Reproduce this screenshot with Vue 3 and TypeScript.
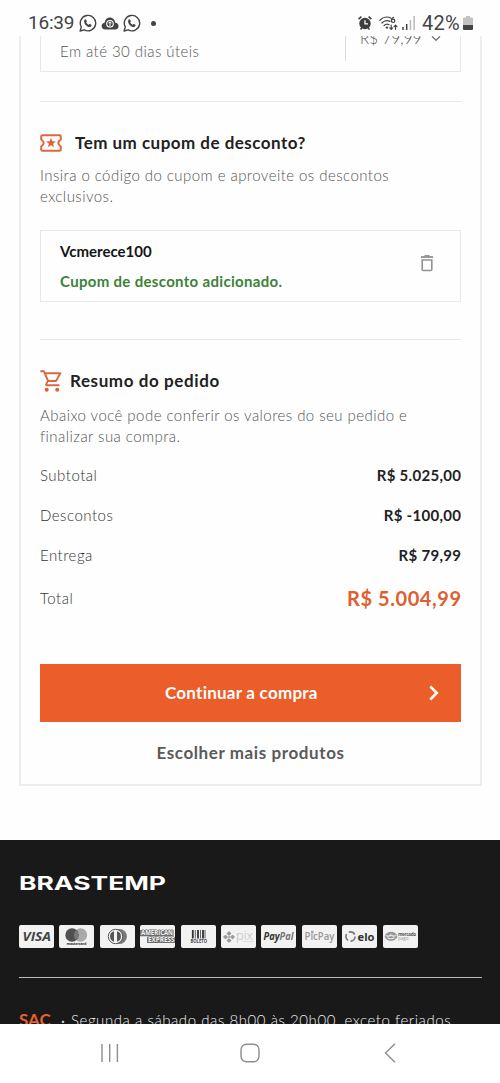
<script setup lang="ts">
interface SummaryRow {
  label: string
  value: string
  total?: boolean
}

const rows: SummaryRow[] = [
  { label: 'Subtotal', value: 'R$ 5.025,00' },
  { label: 'Descontos', value: 'R$ -100,00' },
  { label: 'Entrega', value: 'R$ 79,99' },
  { label: 'Total', value: 'R$ 5.004,99', total: true },
]

const brands: string[] = [
  'visa', 'mastercard', 'diners', 'amex', 'boleto', 'pix', 'paypal', 'picpay', 'elo', 'mercadopago',
]
</script>

<template>
  <div class="screen">
    <header class="status">
      <div class="status-left">
        <span class="clock">16:39</span>
        <svg class="whats" viewBox="0 0 18 18"><path d="M1.1 17 2.3 12.9A7.7 7.7 0 1 1 5.2 15.8Z" fill="none" stroke="#444" stroke-width="1.4" stroke-linejoin="round" /><path d="M5.2 6.4c.5-1.6 1.7-1.4 2-.6l.6 1.4c.2.5-.5 1-.6 1.3.5 1.1 1.3 1.8 2.4 2.3.4-.1.8-.9 1.2-.8l1.6.8c.6.4 0 1.8-1.2 2.1C8.500 13.500 4.500 9.600 5.200 6.400Z" fill="#444" /></svg>
        <svg class="cloud" viewBox="0 0 18 13"><path d="M4.200 12.500C-.3 12.500-.6 6.200 3.500 5.700 4.500-.9 13-1.300 14.300 5.700 18.700 6 18.700 12.500 14 12.500Z" fill="#444" /><circle cx="9" cy="6.800" r="3.300" fill="none" stroke="#fff" stroke-width="1.100" /><path d="M9 9V5M7.500 6.300 9 4.800l1.500 1.500" fill="none" stroke="#fff" /></svg>
        <svg class="whats" viewBox="0 0 18 18"><path d="M1.1 17 2.3 12.9A7.7 7.7 0 1 1 5.2 15.8Z" fill="none" stroke="#444" stroke-width="1.4" stroke-linejoin="round" /><path d="M5.2 6.4c.5-1.6 1.7-1.4 2-.6l.6 1.4c.2.5-.5 1-.6 1.3.5 1.1 1.3 1.8 2.4 2.3.4-.1.8-.9 1.2-.8l1.6.8c.6.4 0 1.8-1.2 2.1C8.500 13.500 4.500 9.600 5.200 6.400Z" fill="#444" /></svg>
        <i class="dot"></i>
      </div>
      <div class="status-right">
        <svg class="alarm" viewBox="0 0 14 14"><circle cx="7" cy="7.500" r="5.700" fill="#3d3d3d" /><path d="M.6 3.200 3.400.7M13.400 3.200 10.600.7M2.500 13.500l1.300-1.600M11.500 13.500l-1.300-1.600" stroke="#3d3d3d" stroke-width="1.600" /><path d="M7 4.200v3.700h3" fill="none" stroke="#fff" stroke-width="1.300" /></svg>
        <svg class="wifi" viewBox="0 0 19 15"><g fill="none" stroke="#444" stroke-width="1.200" stroke-linecap="round"><path d="M.8 4.300C4 .9 8.500.4 11.700 2M2.900 7c2.400-2.500 5.500-2.900 8-1.600M5.100 9.500c1.500-1.500 3.300-1.800 5-.8M14.700 1.300c-2 .6-2.300 2.100-2.300 3.400" /><circle cx="14.100" cy="4.800" r="1.700" /><path d="M12.200 9.200v4M10.800 11.900l1.400 1.500 1.400-1.500M16.500 13.300v-4M15.100 10.600l1.400-1.500 1.400 1.500" /></g><circle cx="8" cy="11.600" r="1.200" fill="#444" /></svg>
        <svg class="signal" viewBox="0 0 13 14"><path d="M1 14v-3M4.700 14V8" stroke="#444" stroke-width="1.500" /><path d="M8.400 14V4M12.100 14V0" stroke="#bbb" stroke-width="1.500" /></svg>
        <span class="percent">42%</span>
        <svg class="battery" viewBox="0 0 10 14"><path d="M3 0h4v1.500h2q1 0 1 1V9H0V2.500q0-1 1-1h2Z" fill="#c2c2c2" /><path d="M0 9h10v4q0 1-1 1H1q-1 0-1-1Z" fill="#444" /></svg>
      </div>
    </header>

    <main class="page">
      <section class="card">
        <div class="delivery">
          <span class="term">Em até 30 dias úteis</span>
          <div class="price-box">
            <span class="price">R$ 79,99</span>
            <svg class="chev" viewBox="0 0 10 6"><path d="M1 .3 5 4.300 9 .3" fill="none" stroke="#777" stroke-width="1.300" /></svg>
          </div>
        </div>

        <div class="coupon">
          <h2 class="title">
            <svg class="ticket" viewBox="0 0 22 18"><path d="M2.500 1.200h17q1.300 0 1.300 1.300v3q-5 3.500 0 7v3q0 1.300-1.300 1.300h-17q-1.300 0-1.300-1.300v-3q5-3.500 0-7v-3q0-1.300 1.300-1.300Z" fill="none" stroke="#dc6840" stroke-width="2" stroke-linejoin="round" /><path d="m11 3.800 1.300 3.400 3.600.2-2.800 2.300.9 3.500-3-2-3 2 .9-3.500-2.800-2.300 3.600-.2Z" fill="#e06032" /></svg>
            <span class="coupon-title">Tem um cupom de desconto?</span>
          </h2>
          <p class="text">Insira o código do cupom e aproveite os descontos<br />exclusivos.</p>
          <div class="applied">
            <div>
              <div class="code">Vcmerece100</div>
              <div class="success">Cupom de desconto adicionado.</div>
            </div>
            <svg class="trash" viewBox="0 0 14 17"><path d="M1 2h12M4.500 1h5" stroke="#999" stroke-width="2" /><path d="M2.200 5h9.600v9.500q0 1-1 1H3.200q-1 0-1-1Z" fill="none" stroke="#929292" stroke-width="1.600" /></svg>
          </div>
        </div>

        <div class="summary">
          <h2 class="title">
            <svg class="cart" viewBox="0 0 22 22"><g fill="none" stroke="#dc6840" stroke-width="1.900" stroke-linejoin="round"><path d="M.3 1.200h3.500l4.300 9.800h7.900l4.400-7.700H4.800M7.900 11l-1.700 3.100q-.5 1.200.9 1.200h12.300" /></g><circle cx="6.700" cy="19.700" r="2" fill="#e06032" /><circle cx="17.200" cy="19.700" r="2" fill="#e06032" /></svg>
            <span class="summary-title">Resumo do pedido</span>
          </h2>
          <p class="text">Abaixo você pode conferir os valores do seu pedido e<br />finalizar sua compra.</p>
          <dl class="rows">
            <div v-for="row in rows" :key="row.label" class="row" :class="{ total: row.total }">
              <dt>{{ row.label }}</dt>
              <dd>{{ row.value }}</dd>
            </div>
          </dl>
        </div>

        <button class="primary" type="button">
          <span>Continuar a compra</span>
          <svg class="arrow" viewBox="0 0 10 16"><path d="m1.300 1.500 6.500 6.500-6.500 6.500" fill="none" stroke="#fff" stroke-width="2.500" /></svg>
        </button>
        <a class="secondary">Escolher mais produtos</a>
      </section>

      <footer class="footer">
        <svg class="logo" viewBox="0 0 147 16"><text x="0" y="14.500" textLength="147" lengthAdjust="spacingAndGlyphs">BRASTEMP</text></svg>
        <div class="brands">
          <svg v-for="brand in brands" :key="brand" class="brand" viewBox="0 0 35 23">
            <rect width="35" height="23" rx="2" fill="#f2f2f2" />
            <template v-if="brand === 'visa'">
              <text x="3.500" y="16" font-size="12.500" font-weight="700" font-style="italic" fill="#444" textLength="28.500" lengthAdjust="spacingAndGlyphs">VISA</text>
            </template>
            <template v-else-if="brand === 'mastercard'">
              <circle cx="21.500" cy="10" r="6.700" fill="#a9a9a9" /><circle cx="13" cy="10" r="6.700" fill="#505050" />
              <path d="M17.200 4.900a6.700 6.700 0 0 1 0 10.200 6.700 6.700 0 0 1 0-10.200Z" fill="#777" />
              <text x="7.500" y="20.300" font-size="3.800" font-weight="700" fill="#333" textLength="20">mastercard</text>
            </template>
            <template v-else-if="brand === 'diners'">
              <path d="M16 4.100h3.500a7.400 7.400 0 0 1 0 14.800H16Z" fill="#777" /><circle cx="15.500" cy="11.500" r="7.200" fill="#f2f2f2" stroke="#555" stroke-width="1" />
              <path d="M14 6.300a5.400 5.400 0 0 0 0 10.400ZM17 6.300a5.400 5.400 0 0 1 0 10.400Z" fill="#555" />
            </template>
            <template v-else-if="brand === 'amex'">
              <g font-weight="700" font-size="6.500" fill="#f2f2f2" stroke="#666" stroke-width="1" paint-order="stroke">
                <rect x="0" y="5" width="33.500" height="6.300" fill="#777" stroke="none" /><rect x="7" y="12" width="28" height="6" fill="#777" stroke="none" />
                <text x="1" y="10.400" textLength="32" lengthAdjust="spacingAndGlyphs">AMERICAN</text><text x="8" y="17.400" textLength="26.500" lengthAdjust="spacingAndGlyphs">EXPRESS</text>
              </g>
            </template>
            <template v-else-if="brand === 'boleto'">
              <path d="M11.800 5v8.500M17 5v8.500M22 5v8.500" stroke="#333" stroke-width="1.800" /><path d="M14.300 5v8.500M19.500 5v8.500M24 5v8.500" stroke="#555" stroke-width=".9" />
              <text x="9.500" y="18.300" font-size="4.500" font-weight="700" fill="#444" textLength="16.500" lengthAdjust="spacingAndGlyphs">BOLETO</text>
            </template>
            <template v-else-if="brand === 'pix'">
              <path d="m8 6.800 1.700 1.700L8 10.200 6.300 8.500ZM8 13.800l1.700 1.700L8 17.200l-1.700-1.700ZM4.500 10.300 6.200 12l-1.700 1.700L2.800 12ZM11.500 10.300l1.700 1.700-1.700 1.700L9.800 12Z" fill="#999" stroke="#999" stroke-width="1.100" stroke-linejoin="round" />
              <path d="M8 10.500 9.500 12 8 13.500 6.500 12Z" fill="#aaa" />
              <text x="15" y="15" font-size="12" font-weight="300" fill="#bbb" textLength="17" lengthAdjust="spacingAndGlyphs">pix</text><path d="M21 16.500h11" stroke="#ddd" />
            </template>
            <template v-else-if="brand === 'paypal'">
              <text x="2.500" y="15" font-size="10.500" font-weight="700" font-style="italic" fill="#333" textLength="30" lengthAdjust="spacingAndGlyphs"><tspan>Pay</tspan><tspan fill="#777">Pal</tspan></text>
            </template>
            <template v-else-if="brand === 'picpay'">
              <text x="2.500" y="15.300" font-size="10.500" font-weight="600" fill="#999" textLength="30" lengthAdjust="spacingAndGlyphs">PicPay</text><rect x="9" y="5.800" width="2.600" height="2.600" fill="#aaa" />
            </template>
            <template v-else-if="brand === 'elo'">
              <circle cx="8.500" cy="11.500" r="4.600" fill="none" stroke="#777" stroke-width="1.600" stroke-dasharray="7 2.630" />
              <text x="15.500" y="15.500" font-size="11" font-weight="700" fill="#333" textLength="17" lengthAdjust="spacingAndGlyphs">elo</text>
            </template>
            <template v-else>
              <ellipse cx="8" cy="11.300" rx="5.800" ry="4" fill="#999" stroke="#888" stroke-width=".8" /><path d="M2.700 10.500q2.600 1.600 5.300-.5 2.700 2 5.300.4M4.500 13q3.500 1.500 7-.3" fill="none" stroke="#eee" stroke-width="1.100" />
              <text x="15" y="11.300" font-size="4.500" font-weight="700" fill="#555" textLength="18">mercado</text><text x="15" y="15.300" font-size="4.500" fill="#999" textLength="10.500">pago</text>
            </template>
          </svg>
        </div>
        <div class="sac"><strong>SAC</strong><span class="sep">·</span><span class="hours">Segunda a sábado das 8h00 às 20h00, exceto feriados.</span></div>
      </footer>
    </main>

    <nav class="nav">
      <svg viewBox="0 0 20 20"><path d="M2 1v18M9.700 1v18M17.400 1v18" stroke="#8e8e8e" stroke-width="1.400" fill="none" /></svg>
      <svg viewBox="0 0 20 20"><rect x="1" y="1.200" width="18" height="17.600" rx="5.500" stroke="#8e8e8e" stroke-width="1.400" fill="none" /></svg>
      <svg viewBox="0 0 20 20"><path d="M15 .8 5.500 10l9.500 9.200" stroke="#8e8e8e" stroke-width="1.400" fill="none" /></svg>
    </nav>
  </div>
</template>

<style>
html,
body {
  margin: 0;
  background: #fefefe;
}
</style>

<style scoped>
* {
  box-sizing: border-box;
}
svg {
  display: block;
  flex: none;
}
.screen {
  display: flex;
  flex-direction: column;
  width: 500px;
  height: 1083px;
  overflow: hidden;
  background: #fefefe;
  font-family: Lato, 'Open Sans', sans-serif;
  font-size: 15px;
  white-space: nowrap;
}
.status {
  flex: none;
  display: flex;
  justify-content: space-between;
  height: 36px;
  padding: 10px 27px 0 28px;
  color: #444;
}
.status-left,
.status-right {
  display: flex;
  align-items: center;
  height: 26px;
}
.clock,
.percent {
  font-family: Roboto, sans-serif;
  font-size: 19px;
  line-height: 26px;
}
.clock { width: 51px; letter-spacing: -0.2px; }
.whats { width: 18px; height: 18px; }
.cloud { width: 18px; height: 13px; margin: 0 4px; }
.dot {
  width: 5px;
  height: 5px;
  margin-left: 10px;
  border-radius: 50%;
  background: #444;
}
.alarm { width: 14px; height: 14px; }
.wifi { width: 19px; height: 15px; margin-left: 7px; }
.signal { width: 13px; height: 14px; margin-left: 4px; }
.percent { width: 40px; margin-left: 7px; font-size: 20px; letter-spacing: 0.2px; }
.battery { width: 10px; height: 14px; margin-left: 1px; }
.page {
  flex: none;
  height: 988px;
  overflow: hidden;
}
.card {
  width: 463px;
  height: 750px;
  margin-left: 19px;
  padding: 0 19px;
  border: solid #ededed;
  border-width: 0 2px 2px;
}
.delivery {
  display: flex;
  justify-content: space-between;
  height: 36px;
  padding-left: 19px;
  overflow: hidden;
  border: solid #e8e8e8;
  border-width: 0 1px 1px;
  color: #555;
}
.term {
  margin-top: 5px;
  font-weight: 300;
  line-height: 20px;
  letter-spacing: 0.45px;
}
.price-box {
  display: flex;
  width: 115px;
  height: 25px;
  padding-left: 14px;
  border-left: 1px solid #ddd;
}
.price {
  width: 71px;
  margin-top: -8px;
  font-weight: 300;
  line-height: 20px;
  letter-spacing: 0.2px;
}
.chev { width: 10px; height: 6px; }
.coupon {
  height: 239px;
  margin-top: 29px;
  padding-top: 29px;
  border-top: 1px solid #e8e8e8;
  border-bottom: 1px solid #e8e8e8;
}
.title {
  display: flex;
  align-items: center;
  height: 24px;
  margin: 0;
  color: #222;
  font-size: 17px;
  font-weight: 700;
  line-height: 22px;
}
.coupon-title { letter-spacing: 0.48px; }
.summary-title { letter-spacing: 0.59px; }
.ticket { width: 22px; height: 18px; margin-right: 13px; }
.cart { width: 22px; height: 22px; margin-right: 8px; }
.text {
  margin: 10px 0 0;
  color: #555;
  font-weight: 300;
  line-height: 20.5px;
  letter-spacing: 0.45px;
}
.applied {
  display: flex;
  justify-content: space-between;
  align-items: center;
  height: 72px;
  margin-top: 24px;
  padding: 0 26px 0 19px;
  border: 1px solid #e8e8e8;
}
.code,
.success {
  font-weight: 700;
  line-height: 30px;
}
.code { color: #151515; }
.success { color: #3d8138; letter-spacing: 0.32px; }
.trash { width: 14px; height: 17px; margin-top: -6px; }
.summary { padding-top: 29px; }
.summary .text { margin-top: 12px; }
.rows { margin: 9px 0 0; }
.row {
  display: flex;
  justify-content: space-between;
  height: 40px;
  line-height: 40px;
}
.row dt { color: #333; font-weight: 300; letter-spacing: 0.5px; }
.row dd { margin: 0 -0.3px 0 0; color: #222; font-weight: 700; letter-spacing: 0.3px; }
.row.total { height: 46px; line-height: 46px; }
.row.total dd { margin-right: -0.6px; color: #de6030; font-size: 20px; letter-spacing: 0.57px; }
.primary {
  display: flex;
  align-items: center;
  width: 421px;
  height: 58px;
  margin: 43px 0 0;
  padding: 0 22px 0 125px;
  justify-content: space-between;
  border: 0;
  background: #eb5e2a;
  color: #fff;
  font: 700 17px Lato, sans-serif;
  letter-spacing: 0.25px;
}
.primary span { margin-top: -2px; }
.arrow { width: 10px; height: 16px; }
.secondary {
  display: block;
  margin-top: 19px;
  color: #5a5a5a;
  font-size: 17px;
  font-weight: 700;
  line-height: 24px;
  letter-spacing: 0.6px;
  text-align: center;
}
.footer {
  height: 190px;
  margin-top: 54px;
  padding: 35px 19px 0;
  background: #191919;
}
.logo { width: 147px; height: 16px; fill: #fff; font: 700 19px Inter, sans-serif; }
.brands {
  display: flex;
  gap: 5.4px;
  height: 87px;
  padding-top: 34px;
  width: 463px;
  border-bottom: 1px solid #bbb;
}
.brand { width: 35px; height: 23px; font-family: 'Open Sans', sans-serif; }
.sac {
  display: flex;
  padding-top: 32px;
  color: #ddd;
  line-height: 20px;
}
.sac strong { width: 42px; color: #e8602e; font-size: 17px; }
.sep { width: 10px; }
.hours { font-weight: 300; color: #eee; letter-spacing: 0.56px; }
.nav {
  flex: 1;
  display: flex;
  justify-content: space-between;
  padding: 19px 100px 0;
  background: #fff;
}
.nav svg { width: 20px; height: 20px; }
</style>
